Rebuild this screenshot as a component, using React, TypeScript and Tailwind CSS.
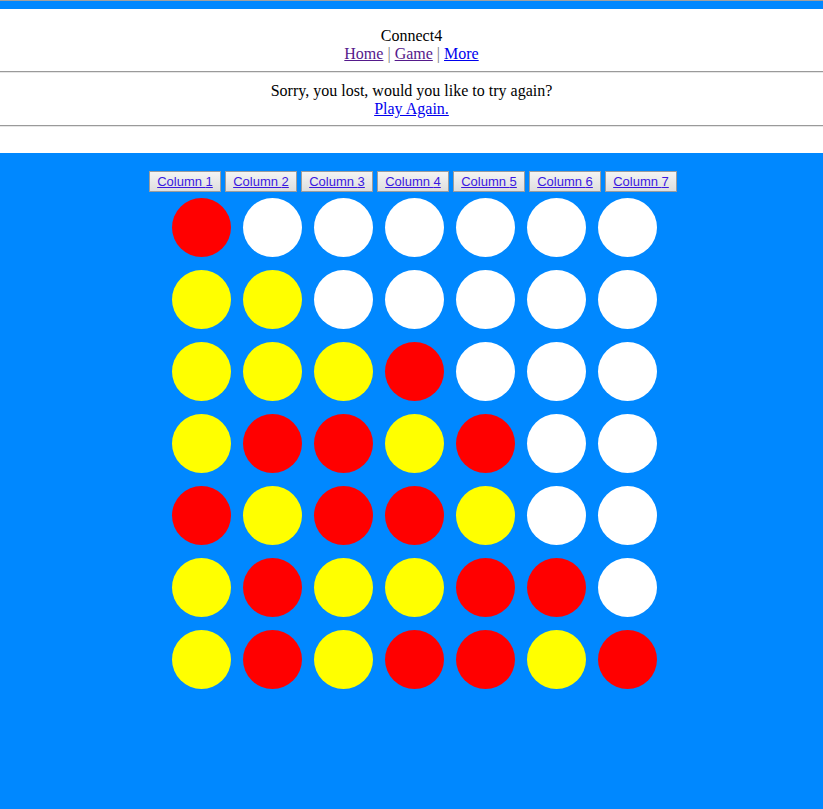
import React from "react";

const board = [
  "RWWWWWW",
  "YYWWWWW",
  "YYYRWWW",
  "YRRYRWW",
  "RYRRYWW",
  "YRYYRRW",
  "YRYRRYR",
];

const colorOf: Record<string, string> = {
  R: "bg-[#ff0000]",
  Y: "bg-[#ffff00]",
  W: "bg-white",
};

export default function App() {
  return (
    <div className="min-h-[809px] bg-[#0088ff] font-['Liberation_Serif',serif] text-[16px] text-black">
      <div className="h-[1px] bg-[#a0a0a0]" />
      <div className="h-[8px] bg-[#0088ff]" />
      <div className="bg-white pt-[18px] text-center leading-[18px]">
        <div>Connect4</div>
        <div>
          <a href="#" className="text-[#551a8b] underline">Home</a>
          <span className="text-[#777]"> | </span>
          <a href="#" className="text-[#551a8b] underline">Game</a>
          <span className="text-[#777]"> | </span>
          <a href="#" className="text-[#0000ee] underline">More</a>
        </div>
        <div className="mt-[8px] h-[2px] border-t border-t-[#9a9a9a] border-b border-b-[#e6e6e6]" />
        <div className="pt-[9px]">Sorry, you lost, would you like to try again?</div>
        <div>
          <a href="#" className="text-[#0000ee] underline">Play Again.</a>
        </div>
        <div className="mt-[7px] h-[2px] border-t border-t-[#9a9a9a] border-b border-b-[#e6e6e6]" />
        <div className="h-[26px]" />
      </div>
      <div className="pt-[18px]">
        <div className="flex justify-center gap-[4px] pl-[3px]">
          {[1, 2, 3, 4, 5, 6, 7].map((n) => (
            <button
              key={n}
              className="h-[21px] w-[72px] border border-[#9c9c9c] bg-gradient-to-b from-[#f4f4f4] to-[#dedede] font-['Liberation_Sans',Arial,sans-serif] text-[13px] leading-[19px] text-[#3a18e0] underline"
            >
              Column {n}
            </button>
          ))}
        </div>
        <div className="mt-[6px] flex flex-col items-center gap-[13px] pl-[6px]">
          {board.map((row, r) => (
            <div key={r} className="flex gap-[12px]">
              {row.split("").map((c, i) => (
                <div key={i} className={`h-[59px] w-[59px] rounded-full ${colorOf[c]}`} />
              ))}
            </div>
          ))}
        </div>
      </div>
    </div>
  );
}
